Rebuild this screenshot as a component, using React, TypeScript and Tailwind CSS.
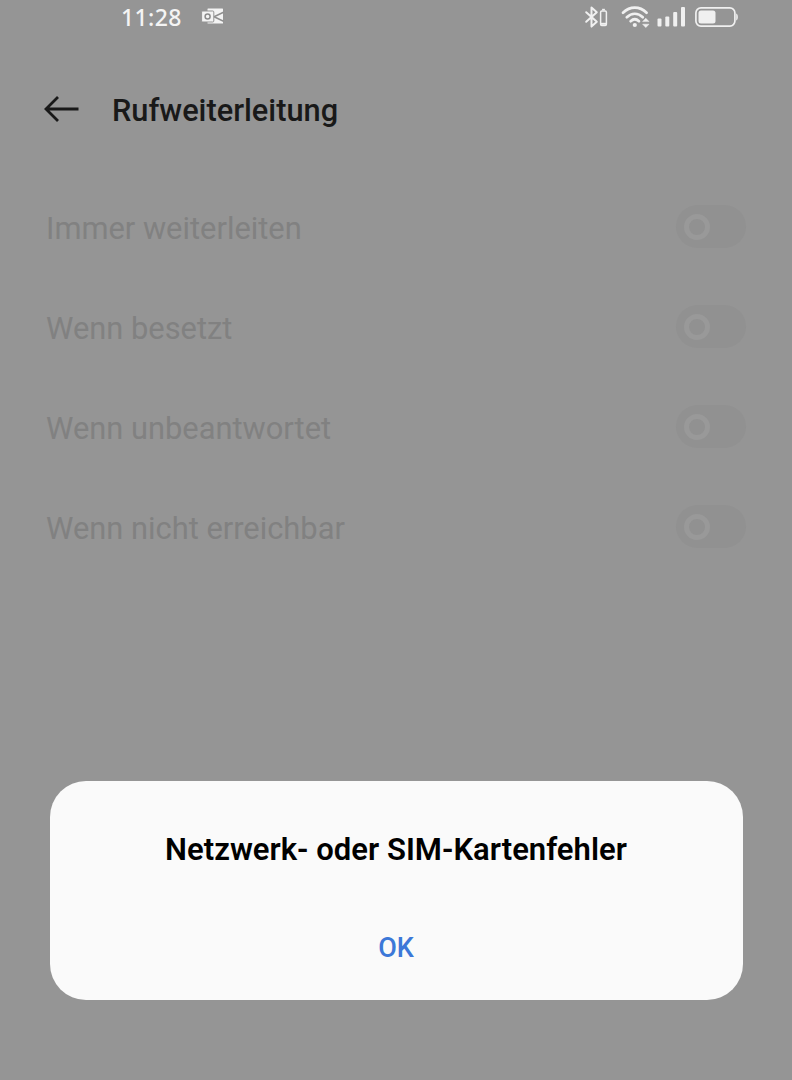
const FORWARDING_OPTIONS = [
  "Immer weiterleiten",
  "Wenn besetzt",
  "Wenn unbeantwortet",
  "Wenn nicht erreichbar",
]

function OutlookIcon() {
  return (
    <svg width="24" height="20" viewBox="0 0 24 20" fill="none" aria-hidden="true">
      <rect x="6.5" y="1.5" width="15.5" height="15" rx="0.6" fill="#f4f4f4" />
      <path d="M22.5 5.2L13 9.8L22.5 14.2" stroke="#8f8f8f" strokeWidth="1.5" />
      <rect x="0.6" y="4" width="12.2" height="11" rx="1" fill="#f4f4f4" stroke="#959595" strokeWidth="1" />
      <circle cx="6.6" cy="9.5" r="2.5" stroke="#8c8c8c" strokeWidth="1.5" />
    </svg>
  )
}

function BluetoothIcon() {
  return (
    <svg width="24" height="24" viewBox="0 0 24 24" fill="none" stroke="#f0f0f0" aria-hidden="true">
      <path d="M2.2 7.2L12.8 16.8L7.5 21.6V2.6L12.8 7.2L2.2 16.8" strokeWidth="2" strokeLinejoin="round" strokeLinecap="round" />
      <rect x="16.6" y="6" width="5.8" height="14.4" rx="1.2" strokeWidth="1.5" />
      <path d="M18.1 4.6H20.9" strokeWidth="1.6" />
      <path d="M17 18.8H22" strokeWidth="2" />
    </svg>
  )
}

function WifiIcon() {
  return (
    <svg width="30" height="24" viewBox="0 0 30 24" fill="none" aria-hidden="true">
      <path
        d="M2 7.8C9 1 18.6 1 25.6 7.8M5.8 12.2C10.6 7.6 17 7.6 21.8 12.2M9.6 16.2C12.2 13.8 15.4 13.8 18 16.2"
        stroke="#f0f0f0"
        strokeWidth="2.7"
        strokeLinecap="round"
      />
      <circle cx="13.8" cy="20" r="2.1" fill="#f0f0f0" />
      <path d="M21.6 16.6L24.8 13.2L28 16.6ZM21.6 19.2H28L24.8 22.6Z" fill="#f0f0f0" stroke="#f0f0f0" strokeWidth="0.5" strokeLinejoin="round" />
    </svg>
  )
}

function SignalIcon() {
  return (
    <svg width="29" height="22" viewBox="0 0 29 22" fill="#f0f0f0" aria-hidden="true">
      <rect x="0.5" y="12.5" width="4" height="8" rx="1" />
      <rect x="8.3" y="10.5" width="4" height="10" rx="1" />
      <rect x="16.2" y="6" width="4" height="14.5" rx="1" />
      <rect x="24" y="1" width="4" height="19.5" rx="1" />
    </svg>
  )
}

function BatteryIcon() {
  return (
    <svg width="44" height="22" viewBox="0 0 44 22" fill="none" aria-hidden="true">
      <rect x="0.9" y="1.9" width="39" height="18.2" rx="5" stroke="#f0f0f0" strokeWidth="1.7" />
      <rect x="3.5" y="4.5" width="17" height="13" rx="2.5" fill="#f0f0f0" />
      <path d="M41.2 7.5C43.4 8 43.4 14 41.2 14.5Z" fill="#f0f0f0" />
    </svg>
  )
}

function StatusBar() {
  return (
    <header className="flex h-[34px] items-center pl-[121px] pr-[53px]">
      <span className="w-[80px] font-['Noto_Sans',sans-serif] text-[23px] font-medium leading-[34px] tracking-[0.4px] text-[#f4f4f4]">
        11:28
      </span>
      <OutlookIcon />
      <div className="ml-auto flex items-center">
        <BluetoothIcon />
        <div className="ml-[13px]">
          <WifiIcon />
        </div>
        <div className="ml-[6px]">
          <SignalIcon />
        </div>
        <div className="ml-[9px]">
          <BatteryIcon />
        </div>
      </div>
    </header>
  )
}

function Toggle() {
  return (
    <button
      type="button"
      role="switch"
      aria-checked="false"
      disabled
      className="mb-px flex h-[43px] w-[70px] items-center rounded-full bg-[#919191] pl-2"
    >
      <span className="size-[26px] rounded-full border-[5px] border-[#999999]" />
    </button>
  )
}

export default function App() {
  return (
    <div className="relative h-[1080px] w-[792px] overflow-hidden bg-[#959595] font-[Roboto,sans-serif]">
      <StatusBar />

      <div className="flex h-[143px] items-center pl-11">
        <svg width="36" height="28" viewBox="0 0 36 28" fill="none" className="mb-[-7px]" aria-label="Zurück">
          <path d="M14 2L2 14L14 26M2 14H34.5" stroke="#191919" strokeWidth="2.8" />
        </svg>
        <h1 className="ml-8 mt-[10px] text-[30.75px] font-medium leading-10 text-[#191919]">Rufweiterleitung</h1>
      </div>

      <main>
        {FORWARDING_OPTIONS.map((label) => (
          <div key={label} className="flex h-[100px] items-center justify-between pl-[46px] pr-[46px]">
            <span className="mt-[3px] text-[30.85px] leading-10 text-[#818181]">{label}</span>
            <Toggle />
          </div>
        ))}
      </main>

      <div
        role="dialog"
        className="absolute left-[49.5px] top-[780.5px] flex h-[219px] w-[693px] flex-col items-center rounded-[36px] bg-[#fafafa]"
      >
        <h2 className="mt-[49px] text-[31px] font-semibold leading-10 tracking-[0.03px] text-black">
          Netzwerk- oder SIM-Kartenfehler
        </h2>
        <button type="button" className="mt-[58px] text-[27px] font-medium leading-10 text-[#3c78d8]">
          OK
        </button>
      </div>
    </div>
  )
}
